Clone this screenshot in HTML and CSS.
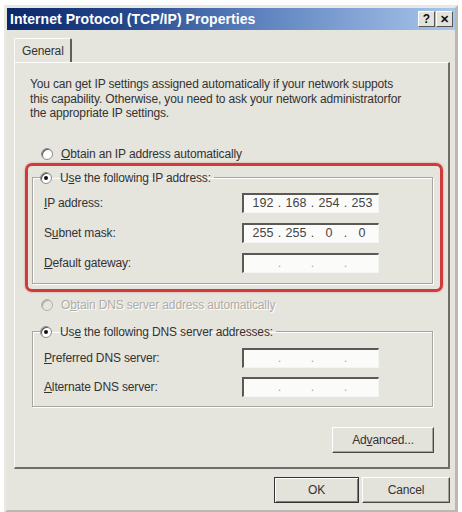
FILE: index.html
```html
<!DOCTYPE html>
<html lang="en">
<head>
<meta charset="utf-8">
<title>Internet Protocol (TCP/IP) Properties</title>
<link rel="stylesheet" href="styles.css">
</head>
<body>
<div class="window">
  <div class="titlebar">
    <span class="title">Internet Protocol (TCP/IP) Properties</span>
    <div class="tbtns">
      <span class="tbtn help">?</span>
      <span class="tbtn close">&#x2715;</span>
    </div>
  </div>
  <div class="tabs"><div class="tab">General</div></div>
  <div class="panel">
    <p class="intro">You can get IP settings assigned automatically if your network suppots<br>this capability. Otherwise, you need to ask your network administratorfor<br>the appropriate IP settings.</p>
    <div class="radio first"><span class="circle"></span><span><u>O</u>btain an IP address automatically</span></div>
    <div class="highlight">
      <fieldset class="group ipgroup">
        <legend class="radio"><span class="circle checked"></span><span>U<u>s</u>e the following IP address:</span></legend>
        <div class="rows">
          <div class="row"><span class="lbl"><u>I</u>P address:</span>
            <span class="ip"><span class="oct">192</span><span class="sep">.</span><span class="oct">168</span><span class="sep">.</span><span class="oct">254</span><span class="sep">.</span><span class="oct">253</span></span></div>
          <div class="row"><span class="lbl">S<u>u</u>bnet mask:</span>
            <span class="ip"><span class="oct">255</span><span class="sep">.</span><span class="oct">255</span><span class="sep">.</span><span class="oct">0</span><span class="sep">.</span><span class="oct">0</span></span></div>
          <div class="row"><span class="lbl"><u>D</u>efault gateway:</span>
            <span class="ip empty"><span class="oct"></span><span class="sep">.</span><span class="oct"></span><span class="sep">.</span><span class="oct"></span><span class="sep">.</span><span class="oct"></span></span></div>
        </div>
      </fieldset>
    </div>
    <div class="radio disabled"><span class="circle"></span><span>O<u>b</u>tain DNS server address automatically</span></div>
    <fieldset class="group dnsgroup">
      <legend class="radio"><span class="circle checked"></span><span>Us<u>e</u> the following DNS server addresses:</span></legend>
      <div class="rows dnsrows">
        <div class="row"><span class="lbl"><u>P</u>referred DNS server:</span>
          <span class="ip empty"><span class="oct"></span><span class="sep">.</span><span class="oct"></span><span class="sep">.</span><span class="oct"></span><span class="sep">.</span><span class="oct"></span></span></div>
        <div class="row"><span class="lbl"><u>A</u>lternate DNS server:</span>
          <span class="ip empty"><span class="oct"></span><span class="sep">.</span><span class="oct"></span><span class="sep">.</span><span class="oct"></span><span class="sep">.</span><span class="oct"></span></span></div>
      </div>
    </fieldset>
    <div class="adv-row"><button class="btn adv">Ad<u>v</u>anced...</button></div>
  </div>
  <div class="actions">
    <button class="btn ok">OK</button>
    <button class="btn cancel">Cancel</button>
  </div>
</div>
</body>
</html>
```

FILE: styles.css
```css
html, body {
  margin: 0;
  padding: 0;
  background: #ffffff;
}
body {
  font-family: "Liberation Sans", Arial, sans-serif;
  font-size: 12px;
  letter-spacing: -0.15px;
  color: #2a2a2a;
}
u { text-decoration: underline; text-underline-offset: 1px; }

.window {
  box-sizing: border-box;
  width: 454px;
  height: 508px;
  margin: 5px 0 0 4px;
  background: #e5e4dd;
  border: 3px solid #e9e8e2;
  border-right-color: #b9b8b1;
  border-bottom-color: #b9b8b1;
  display: flex;
  flex-direction: column;
}

.titlebar {
  height: 22px;
  flex: none;
  display: flex;
  align-items: center;
  justify-content: space-between;
  padding: 0 2px 0 3px;
  background: linear-gradient(to right, #0b2768 0%, #22458a 25%, #5b80bd 55%, #a9c7ec 100%);
}
.title {
  color: #fff;
  font-weight: bold;
  font-size: 14px;
  letter-spacing: 0.05px;
}
.tbtns { display: flex; gap: 1px; }
.tbtn {
  box-sizing: border-box;
  width: 17px;
  height: 16px;
  background: #e3e2db;
  border: 1px solid #fff;
  border-right-color: #555;
  border-bottom-color: #555;
  display: flex;
  align-items: center;
  justify-content: center;
  font-weight: bold;
  color: #111;
  font-size: 12px;
  line-height: 1;
  letter-spacing: 0;
}
.tbtn.close { font-size: 11px; }

.tabs {
  flex: none;
  display: flex;
  padding: 8px 0 0 7px;
}
.tab {
  box-sizing: border-box;
  width: 58px;
  height: 24px;
  padding: 5px 0 0 7px;
  border: 1px solid #fbfbf9;
  border-bottom: none;
  border-right: 2px solid #5e5d58;
  border-radius: 2px 2px 0 0;
  background: #e5e4dd;
  color: #333;
}

.panel {
  flex: none;
  box-sizing: border-box;
  margin: 0 5px 0 7px;
  height: 407px;
  border: 1px solid #fbfbf9;
  border-right: 2px solid #6e6d67;
  border-bottom: 2px solid #6e6d67;
  padding-top: 14px;
}
.intro {
  margin: 0 0 0 15px;
  line-height: 14.5px;
  white-space: nowrap;
  color: #333;
}

.radio {
  display: flex;
  align-items: center;
  height: 16px;
  gap: 8px;
  color: #333;
}
.radio.first { margin: 25px 0 0 26px; }
.circle {
  box-sizing: border-box;
  width: 12px;
  height: 12px;
  border-radius: 50%;
  background: #fff;
  border: 1px solid #8d8c86;
  box-shadow: inset 1px 1px 0 #555;
  display: flex;
  align-items: center;
  justify-content: center;
  flex: none;
}
.circle.checked::after {
  content: "";
  width: 4px;
  height: 4px;
  border-radius: 50%;
  background: #111;
}
.radio.disabled {
  margin: 5px 0 0 26px;
  color: #aeada7;
  text-shadow: 1px 1px 0 #fff;
}
.radio.disabled .circle {
  background: #e5e4dd;
  border-color: #b4b3ad;
  box-shadow: inset 1px 1px 0 #a9a8a2;
}

.highlight {
  box-sizing: border-box;
  margin: 1px 6px 0 10px;
  width: 418px;
  height: 129px;
  border: 3px solid #cf3b3b;
  border-radius: 7px;
  box-shadow: 0 0 2px rgba(200, 40, 40, 0.5);
  padding: 4px 7px 0 4px;
}

.group {
  margin: 0;
  padding: 0 0 10px 0;
  border: 1px solid #a7a6a0;
  box-shadow: 1px 1px 0 #fff, inset 1px 1px 0 #fff;
  min-width: 0;
}
.group legend {
  margin-left: 7px;
  padding: 0 3px 0 0;
}
.ipgroup { height: 114px; box-sizing: border-box; }
.dnsgroup {
  box-sizing: border-box;
  margin: 11px 0 0 17px;
  width: 401px;
  height: 83px;
  padding-bottom: 9px;
}

.rows {
  display: grid;
  grid-template-columns: 198px 137px;
  row-gap: 10px;
  padding: 7px 0 0 11px;
}
.dnsrows { padding-top: 8px; row-gap: 9px; }
.row { display: contents; }
.lbl {
  display: flex;
  align-items: center;
  color: #333;
}

.ip {
  box-sizing: border-box;
  height: 20px;
  background: #fbfbfa;
  border: 1px solid #f4f4f2;
  border-top: 2px solid #5a5955;
  border-left: 2px solid #5a5955;
  display: flex;
  align-items: center;
  padding: 0 3px 0 6px;
  color: #444;
  font-size: 12.5px;
  letter-spacing: 0;
}
.oct { width: 26px; text-align: center; }
.sep { width: 7px; text-align: center; }
.ip.empty .sep { color: #aaa; }

.adv-row {
  display: flex;
  justify-content: flex-end;
  margin: 20px 14px 0 0;
}
.btn {
  box-sizing: border-box;
  font-family: "Liberation Sans", Arial, sans-serif;
  font-size: 12px;
  letter-spacing: -0.15px;
  color: #333;
  background: #e3e2db;
  border: 1px solid #fff;
  border-right-color: #4a4945;
  border-bottom-color: #4a4945;
  box-shadow: inset -1px -1px 0 #a3a29c;
  padding: 0;
  height: 26px;
}
.adv { width: 102px; }

.actions {
  display: flex;
  justify-content: flex-end;
  gap: 3px;
  margin: 8px 5px 0 0;
}
.ok {
  width: 85px;
  border: 1px solid #333;
  box-shadow: inset 1px 1px 0 #fff, inset -1px -1px 0 #7d7c77;
}
.cancel { width: 88px; }
```
